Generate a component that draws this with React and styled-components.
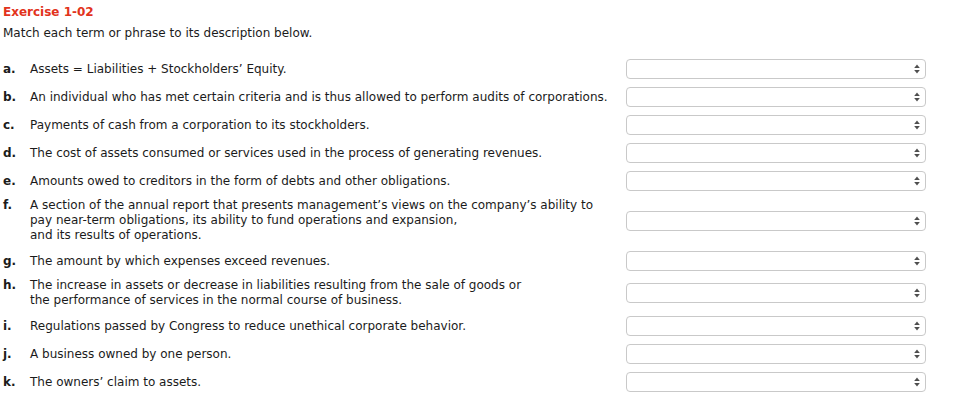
import React from "react";
import styled, { createGlobalStyle } from "styled-components";

const Global = createGlobalStyle`
  html, body { margin: 0; padding: 0; background: #fff; }
  body { font-family: "DejaVu Sans", Verdana, sans-serif; color: #1b1b1b; }
`;

const Page = styled.div`
  width: 926px;
  padding: 4px 0 0 3px;
  box-sizing: border-box;
`;

const Title = styled.div`
  color: #e2331c;
  font-weight: bold;
  font-size: 12px;
  line-height: 16px;
`;

const Intro = styled.div`
  font-size: 12px;
  line-height: 15px;
  margin-top: 6px;
  margin-bottom: 14px;
`;

const List = styled.div`
  display: flex;
  flex-direction: column;
`;

const Row = styled.div`
  display: grid;
  grid-template-columns: 27px 1fr 300px;
  align-items: center;
  padding: ${(p) => (p.multi ? "3px 0 4px" : "4px 0")};
  font-size: 12px;
  line-height: 15px;
`;

const Letter = styled.span`
  font-weight: bold;
  align-self: ${(p) => (p.top ? "start" : "center")};
`;

const Desc = styled.span`
  white-space: nowrap;
`;

const SelectBox = styled.div`
  height: 20px;
  box-sizing: border-box;
  border: 1px solid #c9c9c9;
  border-radius: 4px;
  background: #fff;
  display: flex;
  align-items: center;
  justify-content: flex-end;
  padding-right: 5px;
`;

const Arrows = () => (
  <svg width="6" height="10" viewBox="0 0 6 10">
    <path d="M3 0.5 L5.8 4 L0.2 4 Z" fill="#4e4e4e" />
    <path d="M3 9.5 L5.8 6 L0.2 6 Z" fill="#4e4e4e" />
  </svg>
);

const items = [
  ["a.", ["Assets = Liabilities + Stockholders\u2019 Equity."]],
  ["b.", ["An individual who has met certain criteria and is thus allowed to perform audits of corporations."]],
  ["c.", ["Payments of cash from a corporation to its stockholders."]],
  ["d.", ["The cost of assets consumed or services used in the process of generating revenues."]],
  ["e.", ["Amounts owed to creditors in the form of debts and other obligations."]],
  ["f.", [
    "A section of the annual report that presents management\u2019s views on the company\u2019s ability to",
    "pay near-term obligations, its ability to fund operations and expansion,",
    "and its results of operations.",
  ]],
  ["g.", ["The amount by which expenses exceed revenues."]],
  ["h.", [
    "The increase in assets or decrease in liabilities resulting from the sale of goods or",
    "the performance of services in the normal course of business.",
  ]],
  ["i.", ["Regulations passed by Congress to reduce unethical corporate behavior."]],
  ["j.", ["A business owned by one person."]],
  ["k.", ["The owners\u2019 claim to assets."]],
];

export default function App() {
  return (
    <>
      <Global />
      <Page>
        <Title>Exercise 1-02</Title>
        <Intro>Match each term or phrase to its description below.</Intro>
        <List>
          {items.map(([l, lines]) => (
            <Row key={l} multi={lines.length > 1}>
              <Letter top={lines.length > 1}>{l}</Letter>
              <Desc>
                {lines.map((t, i) => (
                  <React.Fragment key={i}>
                    {i > 0 && <br />}
                    {t}
                  </React.Fragment>
                ))}
              </Desc>
              <SelectBox>
                <Arrows />
              </SelectBox>
            </Row>
          ))}
        </List>
      </Page>
    </>
  );
}
